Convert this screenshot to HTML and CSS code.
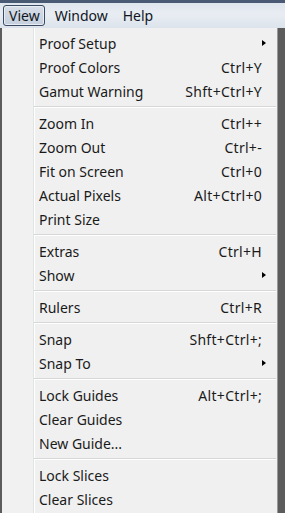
FILE: index.html
```html
<!DOCTYPE html>
<html lang="en">
<head>
<meta charset="UTF-8">
<title>View menu</title>
<link rel="stylesheet" href="styles.css">
</head>
<body>

<div class="menubar">
  <span class="top active">View</span>
  <span class="top">Window</span>
  <span class="top">Help</span>
</div>

<div class="screen">
<div class="menu">
  <div class="item"><span class="label">Proof Setup</span><span class="arrow"></span></div>
  <div class="item"><span class="label">Proof Colors</span><span class="key">Ctrl+Y</span></div>
  <div class="item"><span class="label">Gamut Warning</span><span class="key">Shft+Ctrl+Y</span></div>
  <div class="sep"></div>
  <div class="item"><span class="label">Zoom In</span><span class="key">Ctrl++</span></div>
  <div class="item"><span class="label">Zoom Out</span><span class="key">Ctrl+-</span></div>
  <div class="item"><span class="label">Fit on Screen</span><span class="key">Ctrl+0</span></div>
  <div class="item"><span class="label">Actual Pixels</span><span class="key">Alt+Ctrl+0</span></div>
  <div class="item"><span class="label">Print Size</span></div>
  <div class="sep"></div>
  <div class="item"><span class="label">Extras</span><span class="key">Ctrl+H</span></div>
  <div class="item"><span class="label">Show</span><span class="arrow"></span></div>
  <div class="sep"></div>
  <div class="item"><span class="label">Rulers</span><span class="key">Ctrl+R</span></div>
  <div class="sep"></div>
  <div class="item"><span class="label">Snap</span><span class="key">Shft+Ctrl+;</span></div>
  <div class="item"><span class="label">Snap To</span><span class="arrow"></span></div>
  <div class="sep"></div>
  <div class="item"><span class="label">Lock Guides</span><span class="key">Alt+Ctrl+;</span></div>
  <div class="item"><span class="label">Clear Guides</span></div>
  <div class="item"><span class="label">New Guide...</span></div>
  <div class="sep"></div>
  <div class="item"><span class="label">Lock Slices</span></div>
  <div class="item"><span class="label">Clear Slices</span></div>
</div>
</div>

</body>
</html>
```

FILE: styles.css
```css
body {
  margin: 0;
  font-family: "Noto Sans", "Open Sans", sans-serif;
  font-size: 14px;
  color: #1a1a1a;
  background-color: #2a2e2c;
  overflow: hidden;
}

.menubar {
  height: 25px;
  display: flex;
  align-items: center;
  padding: 0 0 0 3px;
  border-top: 3px solid #4a5a74;
  background: linear-gradient(#dfe5ee, #e9edf3 45%, #dce3ec);
  box-sizing: content-box;
}

.top {
  padding: 0 4px 0 5px;
  margin-right: 4px;
  line-height: 19px;
  border: 1px solid transparent;
  color: #0f1622;
}

.top.active {
  border-color: #3a4a62;
  border-radius: 3px;
  background: linear-gradient(#d6dde8, #c5cfdd);
  box-shadow: inset 0 0 0 1px #e8edf4;
}

.screen {
  display: flex;
  height: 485px;
  background: #5c5c5c;
  padding-left: 2px;
}

.menu {
  width: 276px;
  height: 100%;
  padding-top: 3px;
  box-sizing: border-box;
  border-right: 1px solid #9a9a9a;
  background: linear-gradient(90deg, #f1f1f1 0, #f1f1f1 31px, #e2e3e3 31px, #e2e3e3 32px, #ffffff 32px, #ffffff 33px, #f0f0f0 33px);
}

.item {
  display: flex;
  align-items: center;
  height: 24px;
  padding-left: 37px;
  padding-right: 14px;
}

.label {
  flex: 1;
}

.key {
  padding-right: 1px;
  letter-spacing: 0.3px;
}

.arrow {
  width: 0;
  height: 0;
  border-top: 3.5px solid transparent;
  border-bottom: 3.5px solid transparent;
  border-left: 4px solid #000;
  margin-right: -3px;
}

.sep {
  height: 1px;
  margin: 3px 1px 3px 32px;
  background: #d7d7d7;
  border-bottom: 1px solid #ffffff;
  box-sizing: content-box;
}
```
